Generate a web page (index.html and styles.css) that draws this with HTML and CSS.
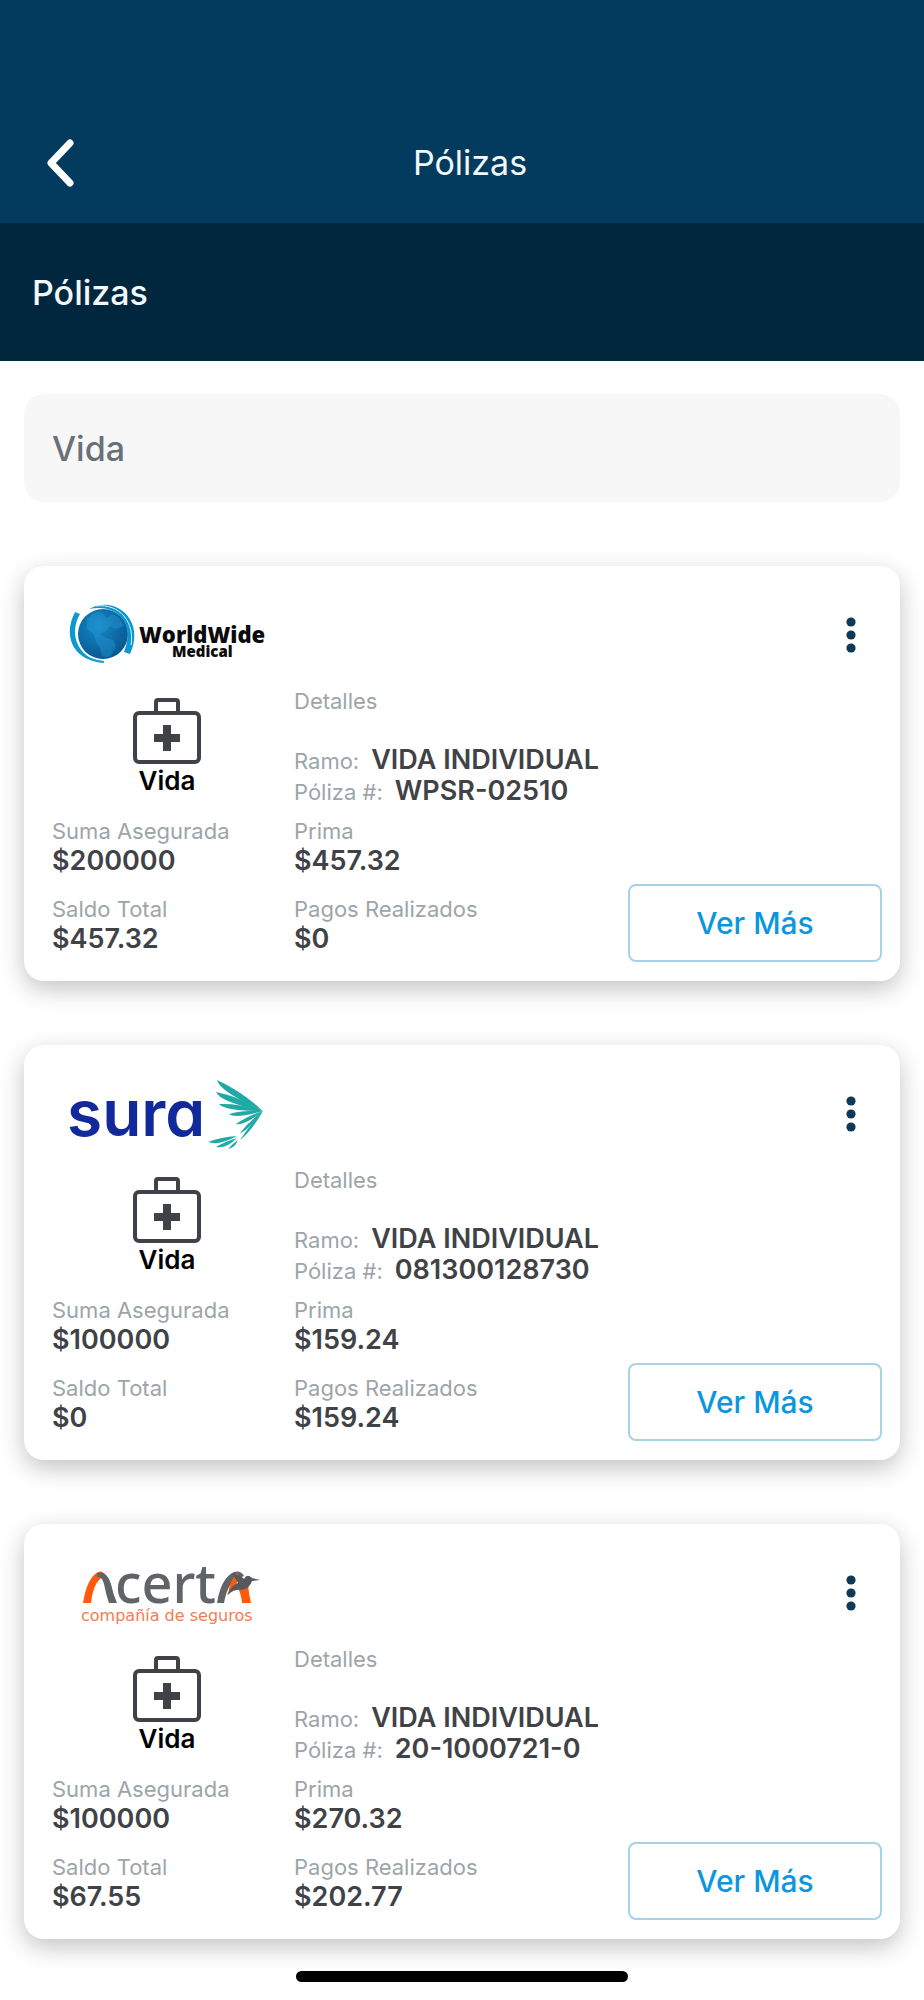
FILE: index.html
```html
<!DOCTYPE html>
<html lang="es">
<head>
<meta charset="utf-8">
<meta name="viewport" content="width=device-width, initial-scale=1">
<title>Pólizas</title>
<link rel="stylesheet" href="styles.css">
</head>
<body>
<svg class="sprite" aria-hidden="true">
  <symbol id="kit" viewBox="0 0 68 66">
    <g fill="none" stroke="#3f4347" stroke-width="4" stroke-linejoin="round">
      <rect x="2" y="15" width="64" height="49" rx="4"/>
      <path d="M23 15V4Q23 2 25 2H43Q45 2 45 4V15"/>
    </g>
    <path d="M30 27h8v9h9v8h-9v9h-8v-9h-9v-8h9z" fill="#3f4347"/>
  </symbol>
  <symbol id="dots" viewBox="0 0 10 36">
    <g fill="#0c3a58"><circle cx="5" cy="5" r="4.600"/><circle cx="5" cy="18" r="4.600"/><circle cx="5" cy="31" r="4.600"/></g>
  </symbol>
</svg>

<header class="topbar">
  <button class="back" type="button" aria-label="Volver">
    <svg width="28" height="48" viewBox="0 0 28 48"><path d="M24 4L5 24L24 44" fill="none" stroke="#fff" stroke-width="7" stroke-linecap="round" stroke-linejoin="round"/></svg>
  </button>
  <h1 class="title">Pólizas</h1>
</header>
<div class="subbar"><h2 class="subtitle">Pólizas</h2></div>

<main class="content">
  <select class="filter" aria-label="Ramo"><option>Vida</option></select>

  <article class="card">
    <div class="card-head">
      <svg class="logo" viewBox="0 0 200 72" role="img" aria-label="WorldWide Medical">
        <defs><radialGradient id="globe" cx=".4" cy=".35" r=".7"><stop offset="0" stop-color="#1588c8"/><stop offset="1" stop-color="#06568f"/></radialGradient></defs>
        <circle cx="33" cy="36" r="25" fill="url(#globe)"/>
        <path d="M17 21Q25 12 31 14L37 20L43 16Q52 21 54 28L46 31L40 28L36 33L30 36L36 40L43 42L46 48L41 58Q35 60 32 58L30 50L26 44L24 36L17 31Z" fill="#2ba3dc" opacity=".35"/>
        <path d="M6 16C-6 39 7 62 34 64" fill="none" stroke="#159fd2" stroke-width="2"/>
        <path d="M5 14L10 16C0 33 5 55 27 63C5 61 -8 39 5 14Z" fill="#0b9bd0"/>
        <path d="M19 11C45 -4 76 22 60 56L54 54C66 25 47 5 19 11Z" fill="#0b96cf"/>
        <path d="M26 8C50 5 65 25 61 47" fill="none" stroke="#d9f4ff" stroke-width="1"/>
        <text x="69" y="45" class="ww-name">WorldWide</text>
        <text x="102" y="59" class="ww-sub">Medical</text>
      </svg>
      <button class="menu" type="button" aria-label="Opciones"><svg width="10" height="36"><use href="#dots"/></svg></button>
    </div>
    <div class="card-body">
      <div class="kind"><svg width="68" height="66" aria-hidden="true"><use href="#kit"/></svg><strong>Vida</strong></div>
      <div class="details">
        <h3 class="label">Detalles</h3>
        <p class="line"><span class="label">Ramo:</span><b>VIDA INDIVIDUAL</b></p>
        <p class="line"><span class="label">Póliza #:</span><b>WPSR-02510</b></p>
      </div>
      <dl class="fact left"><dt>Suma Asegurada</dt><dd>$200000</dd></dl>
      <dl class="fact"><dt>Prima</dt><dd>$457.32</dd></dl>
      <dl class="fact left"><dt>Saldo Total</dt><dd>$457.32</dd></dl>
      <dl class="fact"><dt>Pagos Realizados</dt><dd>$0</dd></dl>
      <button class="more" type="button">Ver Más</button>
    </div>
  </article>

  <article class="card">
    <div class="card-head">
      <svg class="logo" viewBox="0 0 200 72" role="img" aria-label="Sura">
        <text x="-3" y="59" class="sura-name">sura</text>
        <g fill="#20aaa5">
          <path d="M147 3Q150 15 192 33Q171 14 147 3Z"/>
          <path d="M146 15Q150 25 193 34Q170 20 146 15Z"/>
          <path d="M149 27Q155 34 193 34Q169 26 149 27Z"/>
          <path d="M159 37Q165 42 193 34Q174 33 159 37Z"/>
          <path d="M166 47Q174 49 193 34Q177 39 166 47Z"/>
          <path d="M170 56Q178 54 193 34Q179 44 170 56Z"/>
          <path d="M170 63Q181 55 193 34Q179 49 170 63Z"/>
          <path d="M138 65Q149 69 167 59Q151 60 138 65Z"/>
          <path d="M146 70Q156 72 167 61Q154 65 146 70Z"/>
          <path d="M158 72Q165 71 168 63Q162 67 158 72Z"/>
        </g>
      </svg>
      <button class="menu" type="button" aria-label="Opciones"><svg width="10" height="36"><use href="#dots"/></svg></button>
    </div>
    <div class="card-body">
      <div class="kind"><svg width="68" height="66" aria-hidden="true"><use href="#kit"/></svg><strong>Vida</strong></div>
      <div class="details">
        <h3 class="label">Detalles</h3>
        <p class="line"><span class="label">Ramo:</span><b>VIDA INDIVIDUAL</b></p>
        <p class="line"><span class="label">Póliza #:</span><b>081300128730</b></p>
      </div>
      <dl class="fact left"><dt>Suma Asegurada</dt><dd>$100000</dd></dl>
      <dl class="fact"><dt>Prima</dt><dd>$159.24</dd></dl>
      <dl class="fact left"><dt>Saldo Total</dt><dd>$0</dd></dl>
      <dl class="fact"><dt>Pagos Realizados</dt><dd>$159.24</dd></dl>
      <button class="more" type="button">Ver Más</button>
    </div>
  </article>

  <article class="card">
    <div class="card-head">
      <svg class="logo" viewBox="0 0 200 72" role="img" aria-label="Acerta compañía de seguros">
        <path d="M13 47Q17 22 28 16Q33 14 35 19L30 23Q23 29 21 47Z" fill="#ff5a0a"/>
        <path d="M27 17Q37 14 41 28Q43 38 47 47H39Q36 39 34 28Q32 20 27 21Z" fill="#606468"/>
        <text x="45" y="47" class="acerta-name">cert</text>
        <path d="M147 47Q151 22 164 16Q171 14 174 20L169 22Q158 25 154 47Z" fill="#606468"/>
        <path d="M171 24L178 29Q179 39 181 47H172Q171 38 168 32Z" fill="#ff5a0a"/>
        <path d="M158 39Q159 25 168 16Q168 24 166 31Z" fill="#ff5a0a"/>
        <path d="M157 39Q162 29 168 27L162 17Q171 19 174 23Q177 17 182 22L190 24L182 25Q180 32 172 34Q164 33 157 39Z" fill="#55595c"/>
        <text x="11" y="65" class="acerta-sub">compañía de seguros</text>
      </svg>
      <button class="menu" type="button" aria-label="Opciones"><svg width="10" height="36"><use href="#dots"/></svg></button>
    </div>
    <div class="card-body">
      <div class="kind"><svg width="68" height="66" aria-hidden="true"><use href="#kit"/></svg><strong>Vida</strong></div>
      <div class="details">
        <h3 class="label">Detalles</h3>
        <p class="line"><span class="label">Ramo:</span><b>VIDA INDIVIDUAL</b></p>
        <p class="line"><span class="label">Póliza #:</span><b>20-1000721-0</b></p>
      </div>
      <dl class="fact left"><dt>Suma Asegurada</dt><dd>$100000</dd></dl>
      <dl class="fact"><dt>Prima</dt><dd>$270.32</dd></dl>
      <dl class="fact left"><dt>Saldo Total</dt><dd>$67.55</dd></dl>
      <dl class="fact"><dt>Pagos Realizados</dt><dd>$202.77</dd></dl>
      <button class="more" type="button">Ver Más</button>
    </div>
  </article>
</main>
<div class="home-indicator"></div>
</body>
</html>
```
FILE: styles.css
```css
* { box-sizing: border-box; }
body {
  margin: 0;
  background: #fff;
  color: #3f4347;
  font-family: Inter, "Liberation Sans", sans-serif;
}
h1, h2, h3, p, dl, dd { margin: 0; }
button { font: inherit; cursor: pointer; }
.sprite { display: none; }

.topbar {
  display: grid;
  grid-template-columns: 100px 1fr 100px;
  align-items: center;
  padding: 108px 0 6px;
  min-height: 223px;
  background: #033b5f;
}
.back {
  display: flex;
  padding: 0 0 0 46px;
  border: 0;
  background: none;
}
.title {
  color: #f3f8fb;
  font-size: 34px;
  font-weight: 400;
  line-height: 40px;
  text-align: center;
  padding-left: 16px;
}
.subbar {
  display: flex;
  align-items: center;
  min-height: 138px;
  padding: 2px 32px 0;
  background: #01273f;
}
.subtitle {
  color: #f3f8fb;
  font-size: 34px;
  font-weight: 500;
  line-height: 40px;
}

.content {
  display: flex;
  flex-direction: column;
  gap: 64px;
  padding: 33px 24px 0;
}
.filter {
  appearance: none;
  width: 100%;
  height: 108px;
  padding: 0 28px;
  border: 0;
  border-radius: 20px;
  background: #f7f7f7;
  color: #697177;
  font: 500 34px Inter, "Liberation Sans", sans-serif;
}

.card {
  padding: 32px 18px 19px 28px;
  border-radius: 20px;
  background: #fff;
  box-shadow: 0 8px 24px rgba(0, 0, 0, .24);
}
.card-head {
  display: flex;
  justify-content: space-between;
  align-items: center;
  padding: 0 22px 0 18px;
}
.logo { width: 200px; height: 72px; overflow: visible; }
.menu {
  display: flex;
  padding: 6px 4px 4px;
  border: 0;
  background: none;
}
.card-body {
  display: grid;
  grid-template-columns: 242px 1fr 254px;
  grid-template-rows: auto 78px auto;
  padding-top: 20px;
}
.kind {
  display: flex;
  flex-direction: column;
  align-items: center;
  gap: 2px;
  padding: 8px 12px 0 0;
  color: #000;
  font-size: 26px;
  line-height: 30px;
}
.kind strong { font-weight: 600; }
.details { grid-column: 2 / 4; min-height: 127px; }
.label, .fact dt {
  color: #9ca5aa;
  font-size: 22px;
  font-weight: 400;
  line-height: 28px;
}
.details h3 { padding-bottom: 32px; line-height: 22px; }
.line {
  display: flex;
  align-items: baseline;
  gap: 12px;
  line-height: 31px;
}
.line b { font-size: 27px; font-weight: 600; line-height: 31px; }
.fact { min-height: 67px; }
.fact.left { grid-column: 1; }
.fact dd { font-size: 27px; font-weight: 600; line-height: 31px; }
.more {
  grid-column: 3;
  grid-row: 2 / 4;
  align-self: end;
  height: 78px;
  border: 2px solid #a5d3e8;
  border-radius: 8px;
  background: #fff;
  color: #0c96e0;
  font-size: 30px;
  font-weight: 500;
}

.ww-name { font: 800 22px "Open Sans", sans-serif; fill: #0b0b0b; }
.ww-sub { font: 800 15px "Open Sans", sans-serif; fill: #0b0b0b; }
.sura-name {
  font: 600 64px Inter, sans-serif;
  font-feature-settings: "cv11";
  fill: #12299b;
}
.acerta-name { font: 500 54px "Noto Sans", sans-serif; fill: #606468; }
.acerta-sub { font: 400 16px "DejaVu Sans", sans-serif; fill: #f47b53; }

.home-indicator {
  width: 36%;
  height: 11px;
  margin: 32px auto 17px;
  border-radius: 6px;
  background: #000;
}
```
